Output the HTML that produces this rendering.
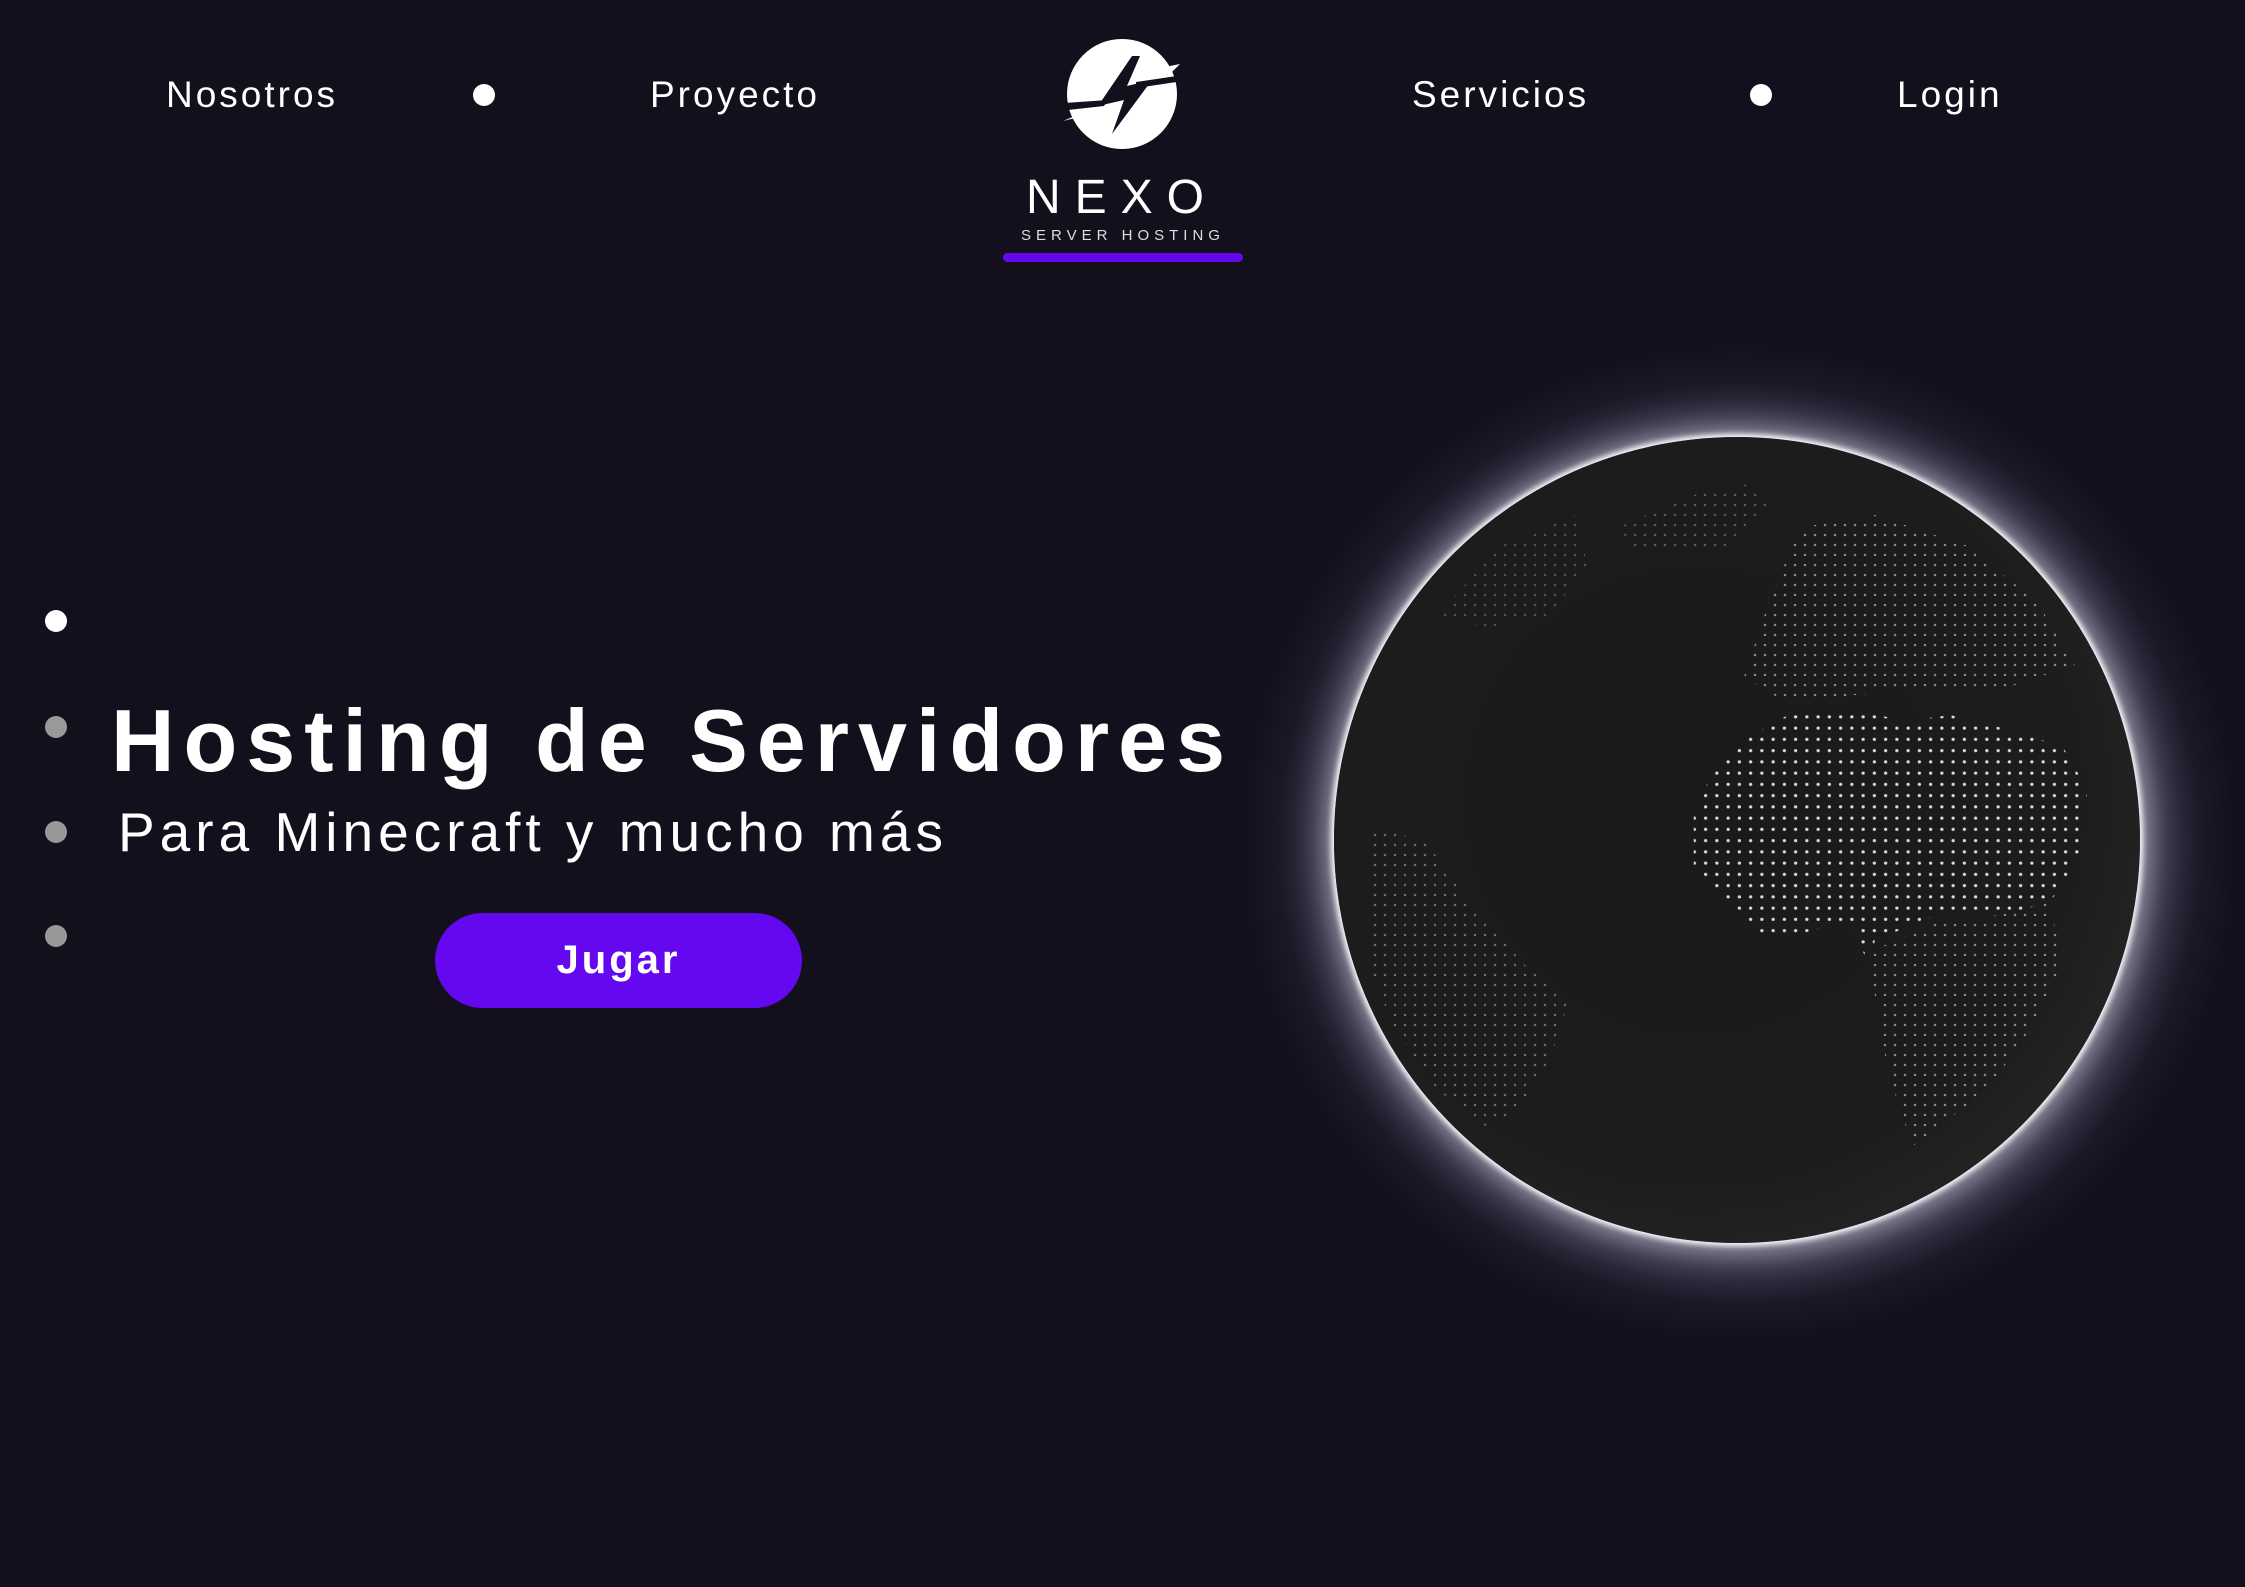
<!DOCTYPE html>
<html><head><meta charset="utf-8"><style>
html,body{margin:0;padding:0}
body{width:2245px;height:1587px;background:#130f1c;position:relative;overflow:hidden;font-family:"Liberation Sans",sans-serif;color:#fff}
.nav{position:absolute;top:72px;font-size:37px;letter-spacing:3px;font-weight:400;line-height:46px}
.dot{position:absolute;border-radius:50%;width:22px;height:22px}
.title{position:absolute;left:111px;top:690px;font-size:88px;font-weight:700;letter-spacing:9px;white-space:nowrap}
.sub{position:absolute;left:118px;top:800px;font-size:55px;letter-spacing:5px;white-space:nowrap}
.btn{position:absolute;left:435px;top:913px;width:367px;height:95px;border-radius:48px;background:#6408f0;text-align:center;line-height:95px;font-size:40px;font-weight:700;letter-spacing:3px}
.halo{position:absolute;left:1240px;top:343px;width:1000px;height:1000px;border-radius:50%;background:radial-gradient(circle closest-side,rgba(130,125,150,.8) 78%,rgba(90,85,110,.55) 85%,rgba(50,45,65,.3) 92%,rgba(19,15,28,0) 100%)}
.globe{position:absolute;left:1334px;top:437px;width:806px;height:806px;border-radius:50%;background:radial-gradient(circle at 45% 45%,#1a1a1a 0%,#1c1c1c 60%,#2a2a2a 88%,#6a6a6a 97%,#ddd 100%);box-shadow:0 0 6px 3px #fff,0 0 30px 8px rgba(220,220,235,.5)}
</style></head><body>
<div class="nav" style="left:166px">Nosotros</div>
<div class="dot" style="left:473px;top:84px;background:#fff"></div>
<div class="nav" style="left:650px">Proyecto</div>
<div class="nav" style="left:1412px">Servicios</div>
<div class="dot" style="left:1750px;top:84px;background:#fff"></div>
<div class="nav" style="left:1897px">Login</div>

<svg style="position:absolute;left:990px;top:20px" width="270" height="250" viewBox="0 0 270 250">
<circle cx="132" cy="74" r="55" fill="#fff"/>
<polygon points="190,44 150,52 150,64 178,56" fill="#fff"/>
<polygon points="73,101 110,92 112,82 85,96" fill="#fff"/>
<polygon points="142,36 108,86 134,80 122,114 162,60 137,66 150,36" fill="#130f1c"/>
<polygon points="60,92 114,86 118,80 60,84" fill="#130f1c"/>
<polygon points="200,60 146,68 146,62 200,54" fill="#130f1c"/>
<text x="132" y="193" text-anchor="middle" font-family="Liberation Sans" font-size="48" letter-spacing="14" fill="#fff">NEXO</text>
<text x="133" y="242" text-anchor="middle" font-family="Liberation Sans" font-size="15" letter-spacing="5" fill="#ddd" transform="translate(0,-22)">SERVER HOSTING</text>
<rect x="13" y="233" width="240" height="9" rx="4.5" fill="#6408f0"/>
</svg>

<div class="dot" style="left:45px;top:610px;background:#fff"></div>
<div class="dot" style="left:45px;top:716px;background:#999"></div>
<div class="dot" style="left:45px;top:821px;background:#999"></div>
<div class="dot" style="left:45px;top:925px;background:#999"></div>

<div class="title">Hosting de Servidores</div>
<div class="sub">Para Minecraft y mucho más</div>
<div class="btn">Jugar</div>

<div class="halo"></div>
<div class="globe"></div>
<svg style="position:absolute;left:1250px;top:340px" width="980" height="980" viewBox="0 0 1568 1568">
<defs>
<pattern id="p" width="18" height="18" patternUnits="userSpaceOnUse"><circle cx="9" cy="9" r="2.6" fill="#ddd"/></pattern>
<pattern id="q" width="16" height="16" patternUnits="userSpaceOnUse"><circle cx="8" cy="8" r="2" fill="#bbb"/></pattern>
</defs>
<polygon fill="url(#p)" points="710,760 740,690 790,640 870,595 960,590 1050,610 1120,600 1200,620 1300,650 1340,720 1330,820 1280,900 1200,920 1100,920 1000,960 990,1000 960,930 880,950 820,950 760,900 710,850"/>
<polygon fill="url(#q)" opacity=".7" points="990,980 1100,930 1200,920 1280,900 1300,1000 1250,1100 1180,1200 1060,1290 1030,1200 1010,1120"/>
<polygon fill="url(#q)" opacity=".7" points="790,540 830,420 880,300 1000,280 1150,330 1260,420 1320,520 1200,560 1050,560 950,570 850,575"/>
<polygon fill="url(#q)" opacity=".5" points="190,780 280,800 350,900 440,1000 510,1060 480,1150 430,1230 380,1260 300,1200 230,1100 190,1000"/>
<polygon fill="url(#q)" opacity=".4" points="590,300 700,250 800,230 830,260 760,330 620,340"/>
<polygon fill="url(#q)" opacity=".35" points="300,440 400,330 520,280 540,360 480,440 380,460"/>
</svg>
</body></html>
